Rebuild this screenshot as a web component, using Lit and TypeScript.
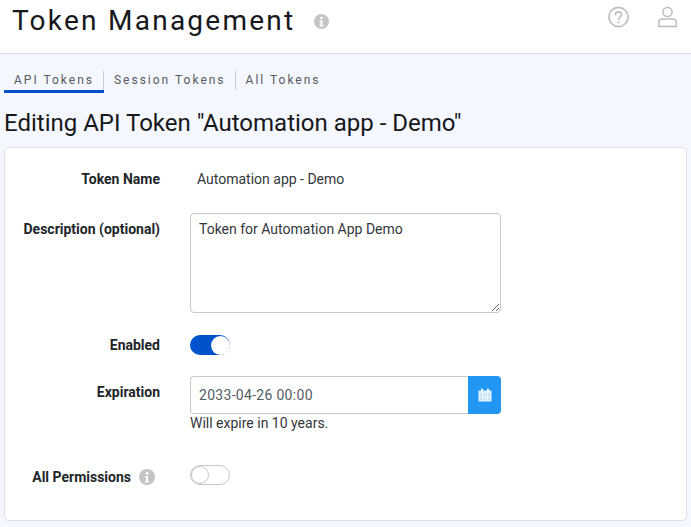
import { LitElement, html, css } from "lit";
import { customElement } from "lit/decorators.js";

const info = (size: number) => html`<svg width=${size} height=${size} viewBox="0 0 16 16" style="display:block">
  <circle cx="8" cy="8" r="8" fill="#c4c4c4"/>
  <circle cx="8" cy="4.2" r="1.5" fill="#fff"/>
  <path d="M6 7h3.1v5H10.2v1.4H5.8V12H7V8.4H6z" fill="#fff"/>
</svg>`;

@customElement("app-root")
export class AppRoot extends LitElement {
  static styles = css`
    :host { display: block; width: 691px; height: 527px; overflow: hidden; background: #f4f7fd; font-family: Roboto, "Liberation Sans", sans-serif; color: #212529; box-sizing: border-box; }
    * { box-sizing: border-box; }
    .top { height: 54px; background: #fff; border-bottom: 1px solid #dcdfe3; display: flex; align-items: flex-start; padding: 4px 13px 0 12px; }
    h1 { margin: 0; font-size: 28px; font-weight: 400; letter-spacing: 2.25px; line-height: 34px; color: #16181b; }
    .title-info { margin: 10px 0 0 19px; }
    .spacer { flex: 1; }
    .top-icons { display: flex; gap: 28px; margin-top: 2px; }
    .tabs { display: flex; align-items: flex-start; height: 22px; margin: 17px 0 0 4px; }
    .tab { font-size: 12px; letter-spacing: 2px; color: #555b62; padding: 0 10px; line-height: 18px; position: relative; height: 19px; }
    .tab.active { border-bottom: 3px solid #0052cc; height: 22px; }
    .tab.sep::after { content: ""; position: absolute; right: 0; top: 0; width: 1px; height: 19px; background: #c8cbcf; }
    h2 { margin: 14px 0 0 4px; font-size: 24px; font-weight: 400; line-height: 32px; color: #16181b; }
    .card { margin: 8px 4px 0; width: 683px; height: 374px; background: #fff; border: 1px solid #dee2e8; border-radius: 5px; display: grid; grid-template-columns: 155px 1fr; column-gap: 30px; grid-auto-rows: min-content; padding-top: 22px; }
    .lbl { font-size: 14px; font-weight: 700; color: #212529; text-align: right; line-height: 18px; display: flex; justify-content: flex-end; align-items: flex-start; gap: 8px; }
    .val { font-size: 14px; line-height: 18px; }
    .name { padding-left: 7px; color: #33373b; }
    .r1 { margin-bottom: 25px; }
    textarea { display: block; width: 311px; height: 100px; border: 1px solid #c8c8c8; border-radius: 4px; padding: 6px 8px; font: 14px/18px Roboto, sans-serif; color: #33373b; margin: 0; outline: none; }
    .r2 { margin-bottom: 22px; }
    .desc { padding-top: 7px; }
    .switch { width: 40px; height: 20px; border-radius: 10px; position: relative; }
    .switch.on { background: #0052cc; }
    .switch.off { background: #fff; border: 1px solid #c8c8c8; }
    .knob { position: absolute; width: 19px; height: 19px; border-radius: 50%; background: #fff; top: 0.5px; right: 0.5px; }
    .off .knob { width: 18px; height: 18px; top: 0; left: 0; right: auto; border: 1px solid #c8c8c8; }
    .r3 { margin-bottom: 21px; }
    .enabled { padding-top: 1px; }
    .exp { padding-top: 7px; }
    .exp-val { margin-bottom: 33px; }
    .date { display: flex; width: 311px; height: 38px; }
    .date .input { flex: 1; border: 1px solid #c8c8c8; border-right: 0; border-radius: 4px 0 0 4px; padding: 0 8px; font-size: 14px; line-height: 36px; color: #555b62; letter-spacing: .3px; }
    .date .btn { width: 33px; background: #2196f3; border-radius: 0 4px 4px 0; display: flex; align-items: center; justify-content: center; }
    .hint { font-size: 14px; line-height: 18px; color: #33373b; }
    .lbl.perm { padding-right: 5px; align-items: center; height: 24px; gap: 8px; }
  `;

  render() {
    return html`
      <div class="top">
        <h1>Token Management</h1>
        <div class="title-info">${info(15)}</div>
        <div class="spacer"></div>
        <div class="top-icons">
          <svg width="22" height="22" viewBox="0 0 22 22" fill="none" stroke="#bdbdbd" stroke-width="1.6">
            <circle cx="10.5" cy="11" r="9.6"/>
            <path d="M7.5 8.8c0-1.8 1.4-2.9 3.1-2.9s3 1.1 3 2.7c0 2.4-3 2.4-3 4.8" stroke-linecap="round"/>
            <circle cx="10.6" cy="16.2" r="1" fill="#bdbdbd" stroke="none"/>
          </svg>
          <svg width="20" height="22" viewBox="0 0 20 22" fill="none" stroke="#bdbdbd" stroke-width="1.5">
            <circle cx="9.5" cy="6" r="4.6"/>
            <path d="M4 13h11a3.4 3.4 0 0 1 3.3 3.5v3.9H0.9v-3.9A3.4 3.4 0 0 1 4 13z"/>
          </svg>
        </div>
      </div>
      <div class="tabs">
        <div class="tab active sep">API Tokens</div>
        <div class="tab sep">Session Tokens</div>
        <div class="tab">All Tokens</div>
      </div>
      <h2>Editing API Token "Automation app - Demo"</h2>
      <div class="card">
        <div class="lbl r1">Token Name</div>
        <div class="val name r1">Automation app - Demo</div>
        <div class="lbl r2 desc">Description (optional)</div>
        <div class="r2"><textarea .value=${"Token for Automation App Demo"}></textarea></div>
        <div class="lbl r3 enabled">Enabled</div>
        <div class="r3"><div class="switch on"><div class="knob"></div></div></div>
        <div class="lbl exp">Expiration</div>
        <div class="exp-val">
          <div class="date">
            <div class="input">2033-04-26 00:00</div>
            <div class="btn">
              <svg width="14" height="14" viewBox="0 0 14 14">
                <path d="M1 2.5h12a.5.5 0 0 1 .5.5v10a.5.5 0 0 1-.5.5H1a.5.5 0 0 1-.5-.5V3a.5.5 0 0 1 .5-.5z" fill="#e3f1fd"/>
                <rect x="3" y="0.5" width="2" height="3" rx="1" fill="#fff"/>
                <rect x="9" y="0.5" width="2" height="3" rx="1" fill="#fff"/>
                <path d="M2 6h10v6H2z" fill="#bcdcf8"/>
                <path d="M2 8h10M2 10h10M4.5 6v6M7 6v6M9.5 6v6" stroke="#fff" stroke-width=".7"/>
              </svg>
            </div>
          </div>
          <div class="hint">Will expire in 10 years.</div>
        </div>
        <div class="lbl perm">All Permissions ${info(16)}</div>
        <div><div class="switch off"><div class="knob"></div></div></div>
      </div>
    `;
  }
}
